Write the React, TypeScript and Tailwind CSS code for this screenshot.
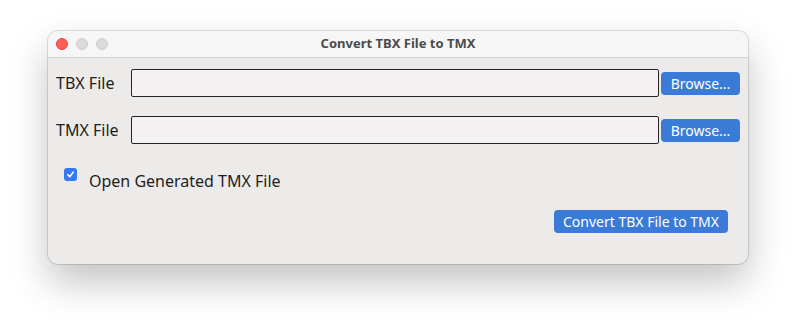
import React from 'react';

const font = { fontFamily: '"Noto Sans", "Open Sans", sans-serif' };

// File picker row: label, text field and Browse button
const FileRow: React.FC<{ label: string; className?: string }> = ({ label, className }) => (
  <div className={`flex items-center ${className ?? ''}`}>
    <span className="w-[75px] text-[16px] leading-[20px] text-[#1d1d1d]">{label}</span>
    <div className="flex-1 h-[28px] bg-[#f3f1f1] border border-[#262626] rounded-[2px]" />
    <button className="ml-[2px] w-[79px] h-[23px] rounded-[4px] bg-[#3a7bd8] text-white text-[14px] leading-[23px] text-center">
      Browse...
    </button>
  </div>
);

export default function App() {
  return (
    <div className="min-h-screen bg-white pt-[31px] pl-[48px]" style={font}>
      <div className="w-[700px] h-[233px] rounded-[10px] bg-[#ecebe9] overflow-hidden shadow-[0_0_0_1px_rgba(0,0,0,0.12),0_18px_38px_rgba(0,0,0,0.24)]">
        {/* Title bar */}
        <div className="h-[27px] bg-[#f7f6f6] border-b border-[#d3d2d2] grid grid-cols-[1fr_auto_1fr] items-center">
          <div className="flex items-center gap-[8px] pl-[8px]">
            <span className="w-[12px] h-[12px] rounded-full bg-[#ff5f57] border border-[#e2463f]" />
            <span className="w-[12px] h-[12px] rounded-full bg-[#dcdbdb] border border-[#cdcccc]" />
            <span className="w-[12px] h-[12px] rounded-full bg-[#dcdbdb] border border-[#cdcccc]" />
          </div>
          <span className="text-[13px] font-bold text-[#4b4b4b]">Convert TBX File to TMX</span>
          <div />
        </div>

        <div className="px-[8px] pt-[11px]">
          <FileRow label="TBX File" />
          <FileRow label="TMX File" className="mt-[19px]" />

          <div className="flex items-start mt-[24px] pl-[8px]">
            <span className="w-[13px] h-[13px] rounded-[3px] bg-[#3478f6] flex items-center justify-center">
              <svg width="9" height="9" viewBox="0 0 10 10" fill="none">
                <path d="M2 5.2 L4.2 7.4 L8 2.4" stroke="white" strokeWidth="1.8" strokeLinecap="round" strokeLinejoin="round" />
              </svg>
            </span>
            <span className="ml-[12px] text-[16px] leading-[26px] text-[#1d1d1d]">Open Generated TMX File</span>
          </div>

          <div className="flex justify-end pr-[12px] mt-[16px]">
            <button className="w-[174px] h-[23px] rounded-[4px] bg-[#3a7bd8] text-white text-[14px] leading-[23px] text-center">
              Convert TBX File to TMX
            </button>
          </div>
        </div>
      </div>
    </div>
  );
}
